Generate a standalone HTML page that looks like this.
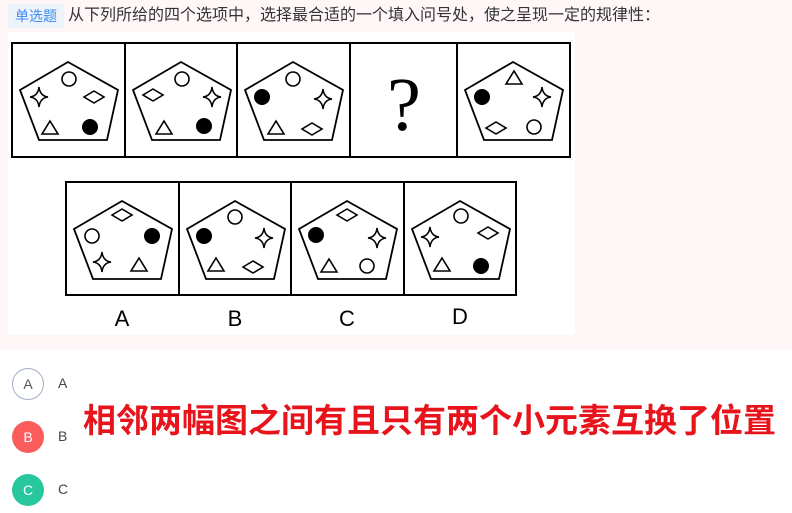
<!DOCTYPE html>
<html><head><meta charset="utf-8"><style>
body{margin:0;width:792px;height:513px;background:#fff;font-family:"Liberation Sans","Noto Sans CJK SC",sans-serif;position:relative;overflow:hidden}
.top{position:absolute;left:0;top:0;width:792px;height:350px;background:#fff7f7}
.tag{position:absolute;left:8px;top:4px;width:56px;height:24px;background:#eef2fa;color:#3d8df2;font-size:14px;line-height:24px;text-align:center;border-radius:3px}
.q{position:absolute;left:68px;top:5px;font-size:16px;color:#333;line-height:22px;white-space:nowrap}
.opt{position:absolute;left:12px;width:32px;height:32px;border-radius:50%;text-align:center;line-height:32px;font-size:14px;color:#fff}
.lab{position:absolute;left:58px;font-size:14px;color:#445}
.big{position:absolute;left:83px;top:396px;font-size:33px;font-weight:bold;color:#e8141c;font-family:"Noto Sans CJK SC",sans-serif;line-height:44px;white-space:nowrap}
</style></head><body>
<div class="top"></div>
<div class="tag">单选题</div>
<div class="q">从下列所给的四个选项中，选择最合适的一个填入问号处，使之呈现一定的规律性：</div>
<svg style="position:absolute;left:0;top:0" width="792" height="350">
<defs>
<g id="pent"><polygon points="56,19 106,47 95,97 27,97 8,47" fill="none" stroke="#000" stroke-width="1.8"/></g>
<circle id="oc" r="7" fill="none" stroke="#000" stroke-width="1.6"/>
<circle id="fc" r="8" fill="#000"/>
<polygon id="tr" points="0,-7 8,6 -8,6" fill="none" stroke="#000" stroke-width="1.6"/>
<polygon id="di" points="-10,0 0,-6 10,0 0,6" fill="none" stroke="#000" stroke-width="1.6"/>
<path id="st" d="M0,-10 Q1,-1 9,0 Q1,1 0,10 Q-1,1 -9,0 Q-1,-1 0,-10Z" fill="#fff" stroke="#000" stroke-width="1.5"/>
</defs>
<rect x="8" y="32" width="567" height="303" fill="#fff"/>
<rect x="12" y="43" width="558" height="114" fill="none" stroke="#000" stroke-width="2"/>
<path d="M125,43V157M237,43V157M350,43V157M457,43V157" stroke="#000" stroke-width="2"/>
<rect x="66" y="182" width="450" height="113" fill="none" stroke="#000" stroke-width="2"/>
<path d="M179,182V295M291,182V295M404,182V295" stroke="#000" stroke-width="2"/>
<g transform="translate(12,43)"><use href="#pent"/><use href="#oc" x="57" y="36"/><use href="#st" x="27" y="54"/><use href="#di" x="82" y="54"/><use href="#tr" x="38" y="85"/><use href="#fc" x="78" y="84"/></g>
<g transform="translate(125,43)"><use href="#pent"/><use href="#oc" x="57" y="36"/><use href="#di" x="28" y="52"/><use href="#st" x="87" y="54"/><use href="#tr" x="39" y="85"/><use href="#fc" x="79" y="83"/></g>
<g transform="translate(237,43)"><use href="#pent"/><use href="#oc" x="56" y="36"/><use href="#fc" x="25" y="54"/><use href="#st" x="86" y="56"/><use href="#tr" x="39" y="85"/><use href="#di" x="75" y="86"/></g>
<text x="404" y="130" font-family="Liberation Serif,serif" font-size="76" text-anchor="middle">?</text>
<g transform="translate(457,43)"><use href="#pent"/><use href="#tr" x="57" y="35"/><use href="#fc" x="25" y="54"/><use href="#st" x="85" y="54"/><use href="#di" x="39" y="85"/><use href="#oc" x="77" y="84"/></g>
<g transform="translate(66,182)"><use href="#pent"/><use href="#di" x="56" y="33"/><use href="#oc" x="26" y="54"/><use href="#fc" x="86" y="54"/><use href="#st" x="36" y="80"/><use href="#tr" x="73" y="83"/></g>
<g transform="translate(179,182)"><use href="#pent"/><use href="#oc" x="56" y="35"/><use href="#fc" x="25" y="54"/><use href="#st" x="85" y="56"/><use href="#tr" x="37" y="83"/><use href="#di" x="74" y="85"/></g>
<g transform="translate(291,182)"><use href="#pent"/><use href="#di" x="56" y="33"/><use href="#fc" x="25" y="53"/><use href="#st" x="86" y="56"/><use href="#tr" x="38" y="84"/><use href="#oc" x="76" y="84"/></g>
<g transform="translate(404,182)"><use href="#pent"/><use href="#oc" x="57" y="34"/><use href="#st" x="26" y="55"/><use href="#di" x="84" y="51"/><use href="#tr" x="38" y="83"/><use href="#fc" x="77" y="84"/></g>
<g font-family="Liberation Sans,sans-serif" font-size="22" text-anchor="middle">
<text x="122" y="326">A</text><text x="235" y="326">B</text><text x="347" y="326">C</text><text x="460" y="324">D</text></g>
</svg>
<div class="opt" style="top:368px;border:1px solid #a3adc4;width:30px;height:30px;line-height:30px;color:#555">A</div>
<div class="lab" style="top:375px">A</div>
<div class="opt" style="top:421px;background:#fb5c5c">B</div>
<div class="lab" style="top:428px">B</div>
<div class="opt" style="top:474px;background:#28c79d">C</div>
<div class="lab" style="top:481px">C</div>
<div class="big">相邻两幅图之间有且只有两个小元素互换了位置</div>
</body></html>
